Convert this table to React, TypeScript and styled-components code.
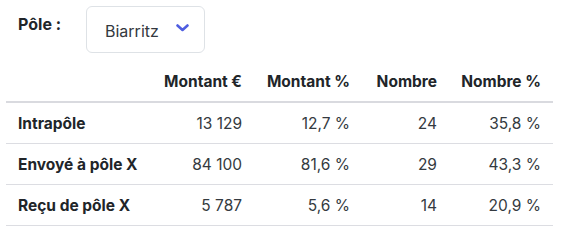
import React, { FC } from 'react';
import styled, { createGlobalStyle } from 'styled-components';

const GlobalStyle = createGlobalStyle`
    body {
        margin: 0;
        background: #ffffff;
        font-family: Inter, "Noto Sans", sans-serif;
        color: #212529;
    }
`;

const Page = styled.div`
    padding: 6px 0 0 6px;
    width: 547px;
`;

const FilterBar = styled.div`
    display: flex;
    align-items: flex-start;
`;

const Label = styled.label`
    font-size: 16px;
    font-weight: 700;
    color: #212529;
    padding: 8px 0 0 12px;
    width: 68px;
`;

const Select = styled.div`
    display: flex;
    align-items: center;
    justify-content: space-between;
    box-sizing: border-box;
    width: 119px;
    height: 47px;
    padding: 2px 15px 0 18px;
    border: 1px solid #dee2e6;
    border-radius: 6px;
    font-size: 16px;
    color: #333840;
`;

const Chevron = styled.svg`
    width: 13px;
    height: 8px;
    margin-top: -6px;
`;

const Table = styled.table`
    border-collapse: collapse;
    table-layout: fixed;
    width: 547px;
    margin-top: 9px;
    font-size: 15.5px;
`;

const TH = styled.th<{ $w: number }>`
    box-sizing: border-box;
    width: ${p => p.$w}px;
    height: 40px;
    padding: 0 12px;
    text-align: right;
    font-weight: 700;
    color: #212529;
    border-bottom: 2px solid #d9dadf;
    vertical-align: middle;
    white-space: nowrap;
`;

const TD = styled.td<{ $head?: boolean }>`
    height: 40px;
    padding: 0 12px;
    text-align: ${p => (p.$head ? 'left' : 'right')};
    font-weight: ${p => (p.$head ? 700 : 400)};
    color: ${p => (p.$head ? '#212529' : '#343a40')};
    border-bottom: 1px solid #dcdde2;
    white-space: nowrap;
`;

type $Row = { label: string; values: Array<string> };

const columns = [
    { title: '', w: 146 },
    { title: 'Montant €', w: 102 },
    { title: 'Montant %', w: 108 },
    { title: 'Nombre', w: 87 },
    { title: 'Nombre %', w: 104 },
];

const rows: Array<$Row> = [
    { label: 'Intrapôle', values: ['13 129', '12,7 %', '24', '35,8 %'] },
    { label: 'Envoyé à pôle X', values: ['84 100', '81,6 %', '29', '43,3 %'] },
    { label: 'Reçu de pôle X', values: ['5 787', '5,6 %', '14', '20,9 %'] },
];

const App: FC = () => {
    return <>
        <GlobalStyle />
        <Page>
            <FilterBar>
                <Label>Pôle :</Label>
                <Select>
                    <span>Biarritz</span>
                    <Chevron viewBox="0 0 13 8">
                        <polyline points="1.5,1.5 6.5,6 11.5,1.5" fill="none" stroke="#4f5ee0" strokeWidth="2.6" strokeLinecap="round" strokeLinejoin="round" />
                    </Chevron>
                </Select>
            </FilterBar>
            <Table>
                <thead>
                <tr>
                    {columns.map(c => <TH key={c.title} $w={c.w}>{c.title}</TH>)}
                </tr>
                </thead>
                <tbody>
                {rows.map(r => <tr key={r.label}>
                    <TD $head>{r.label}</TD>
                    {r.values.map((v, i) => <TD key={i}>{v}</TD>)}
                </tr>)}
                </tbody>
            </Table>
        </Page>
    </>;
};

export default App;
